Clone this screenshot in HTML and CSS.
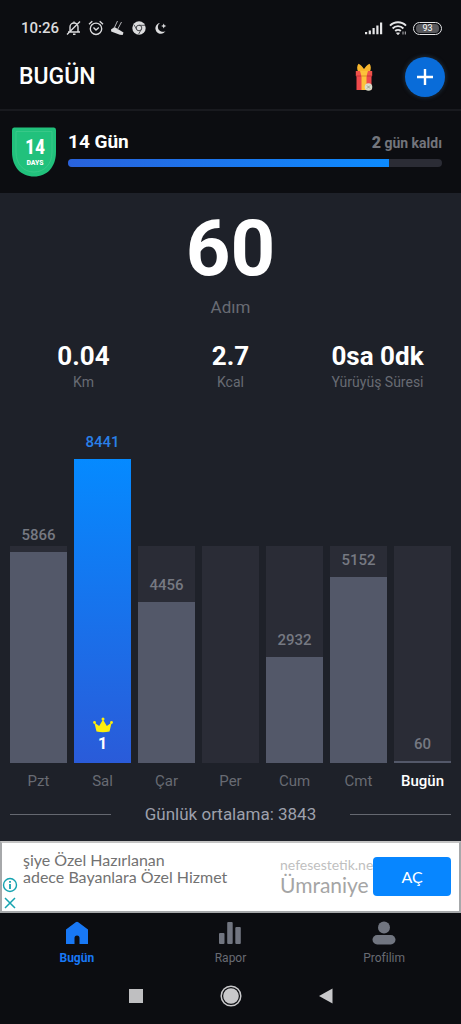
FILE: index.html
```html
<!DOCTYPE html>
<html lang="tr">
<head>
<meta charset="utf-8">
<meta name="viewport" content="width=device-width, initial-scale=1">
<title>Bugün</title>
<link rel="stylesheet" href="styles.css">
</head>
<body>
<div class="status">
  <span class="clock">10:26</span>
  <div class="status-icons">
    <svg width="16" height="16" viewBox="0 0 16 16" fill="none" stroke="#dcdcde" stroke-width="1.4"><path d="M4 11.5V7a4 4 0 0 1 8 0v4.500M2 12h12M7 14.300h2.500M8 1.500v1.500M1 14.500 14 1.500"/></svg>
    <svg width="16" height="16" viewBox="0 0 16 16" fill="none" stroke="#dcdcde" stroke-width="1.400"><circle cx="8" cy="8.800" r="5.700"/><path d="M5.500 7.500 8 10l2.800-2.500M1 4.300 4.300 1.300M15 4.300l-3.300-3"/></svg>
    <svg width="15" height="16" viewBox="0 0 15 16"><path d="M1 9.500 4.500 7l9 5.500-.8 2.500-2.900-.2L1.200 11.500z" fill="#dcdcde"/><path d="M7.500 1 4 8.500M11.500 2 7.500 9.500" stroke="#b4b4b8" stroke-width="1"/></svg>
    <svg width="16" height="16" viewBox="0 0 16 16"><circle cx="8" cy="8" r="6.700" fill="#dcdcde"/><circle cx="8" cy="8" r="2.800" fill="#dcdcde" stroke="#44454a" stroke-width="1"/><path d="M8 5.300h6M5.700 9.400 3 4.800M10.300 9.400 7.500 14.300" stroke="#44454a" stroke-width=".9"/></svg>
    <svg width="15" height="16" viewBox="0 0 14 16"><path d="M6.500 3A5.400 5.400 0 1 0 12 11 4.200 4.200 0 0 1 6.500 3z" fill="#dcdcde"/><path d="m10.200 3.500.8 1.800 1.800.7-1.800.8-.8 1.800-.8-1.800-1.800-.8 1.800-.7z" fill="#dcdcde"/></svg>
  </div>
  <div class="signal">
    <svg width="18" height="14" viewBox="0 0 18 14" fill="#e6e6e8"><path d="M0 11h2.200v2.300H0zM3.700 9.500h2.200v3.800H3.700zM7.500 7h2.200v6.300H7.500zM11.300 4.500h2.200v8.800h-2.200zM15 1.500h2.200v11.800H15z"/></svg>
    <svg width="18" height="14" viewBox="0 0 18 14" fill="none" stroke="#e6e6e8" stroke-width="1.900"><path d="M1 4.700a11 11 0 0 1 16 0M3.600 7.500a7.400 7.400 0 0 1 10.800 0M6.200 10a4 4 0 0 1 5.600 0"/><path d="m9 13.800-1.500-1.900h3zM14 10.500v3M16.300 10.500v3" fill="#e6e6e8" stroke-width=".8"/></svg>
    <span class="battery"><span class="battery-level">93</span></span>
  </div>
</div>

<header class="header">
  <h1 class="title">BUGÜN</h1>
  <button class="gift" type="button" aria-label="Hediye">
    <svg width="18" height="28" viewBox="0 0 18 28"><path d="M3 8.500C1.800 6 1.800 3 3.500.800 6 2 7.500 4 9 6c1.500-2 3-4 5.500-5.200C16.200 3 16.200 6 15 8.500z" fill="#f8b62d"/><path d="M1.500 9h15v18h-15z" fill="#ef4a4c"/><path d="M.8 8h16.400v5H.8z" fill="#f0524b"/><path d="M1 12.500h16v1H1z" fill="#c93238"/><path d="M5 8h8l-1.500 5V27h-5V13z" fill="#fcc23b"/><path d="M6.500 12.500h5v1h-5z" fill="#dc8c24"/><circle cx="13.500" cy="24" r="3.800" fill="#d9dccb"/><path d="m12 22.500 3 3m0-3-3 3" stroke="#8c907d" stroke-width=".8"/></svg>
  </button>
  <button class="add" type="button" aria-label="Ekle">
    <svg width="18" height="18" viewBox="0 0 18 18" stroke="#fff" stroke-width="2.400"><path d="M9 1v16M1 9h16"/></svg>
  </button>
</header>

<section class="challenge">
  <svg class="badge" width="46" height="50" viewBox="0 0 46 50"><path d="M3 .5h40q2 0 2 2.500v22C45 40 36 49.500 23 49.500S1 40 1 25V3Q1 .500 3 .500z" fill="#21c17c"/><path d="M5 4.500h36V25c0 12-7.500 20-18 20S5 37 5 25z" fill="none" stroke="#38c888"/><text class="badge-number" x="24" y="27">14</text><text class="badge-unit" x="24" y="38">DAYS</text></svg>
  <div class="challenge-body">
    <div class="challenge-row">
      <h2 class="challenge-name">14 Gün</h2>
      <span class="remaining"><b class="remaining-count">2</b> gün kaldı</span>
    </div>
    <div class="progress"><div class="progress-fill" style="width:85.700%"></div></div>
  </div>
</section>

<main class="main">
  <div class="steps">60</div>
  <div class="steps-label">Adım</div>
  <div class="stats">
    <div><div class="stat-value">0.04</div><div class="stat-label">Km</div></div>
    <div><div class="stat-value">2.7</div><div class="stat-label">Kcal</div></div>
    <div><div class="stat-value">0sa 0dk</div><div class="stat-label">Yürüyüş Süresi</div></div>
  </div>

  <div class="chart">
    <div class="day"><div class="plot"><span class="count">5866</span><div class="bar" style="height:211px"></div></div><span class="day-name">Pzt</span></div>
    <div class="day"><div class="plot"><span class="count count-best">8441</span><div class="bar bar-best" style="height:304px"><svg width="20" height="16" viewBox="0 0 20 16" fill="#fdee0b"><path d="M3.500 14.500 1.300 5.500 6.200 9 10 2.500 13.800 9l4.900-3.500-2.200 9q-6.500 1.500-13 0z"/><circle cx="1.500" cy="5.500" r="1.400"/><circle cx="10" cy="2" r="1.500"/><circle cx="18.500" cy="5.500" r="1.400"/></svg><span class="rank">1</span></div></div><span class="day-name">Sal</span></div>
    <div class="day"><div class="plot"><span class="count">4456</span><div class="bar" style="height:161px"></div></div><span class="day-name">Çar</span></div>
    <div class="day"><div class="plot"></div><span class="day-name">Per</span></div>
    <div class="day"><div class="plot"><span class="count">2932</span><div class="bar" style="height:106px"></div></div><span class="day-name">Cum</span></div>
    <div class="day"><div class="plot"><span class="count">5152</span><div class="bar" style="height:186px"></div></div><span class="day-name">Cmt</span></div>
    <div class="day"><div class="plot"><span class="count">60</span><div class="bar" style="height:2px"></div></div><span class="day-name day-today">Bugün</span></div>
  </div>

  <div class="average">Günlük ortalama: 3843</div>
</main>

<aside class="ad">
  <div class="ad-marks">
    <svg width="16" height="16" viewBox="0 0 16 16" fill="none" stroke="#16a3b0" stroke-width="1.400"><circle cx="8" cy="8" r="6.500"/><path d="M8 7v5M8 4v1.800" stroke-width="1.800"/></svg>
    <svg width="16" height="16" viewBox="0 0 16 16" stroke="#16a3b0" stroke-width="1.500"><path d="m3 3 10 10M13 3 3 13"/></svg>
  </div>
  <div class="ad-copy"><div>şiye Özel Hazırlanan</div><div>adece Bayanlara Özel Hizmet</div></div>
  <div class="ad-place"><div class="ad-site">nefesestetik.ne</div><div class="ad-town">Ümraniye</div></div>
  <button class="ad-open" type="button">AÇ</button>
</aside>

<nav class="tabs">
  <a class="tab tab-active" href="#"><svg width="24" height="24" viewBox="0 0 24 24" fill="currentColor"><path d="M12 .8q.7 0 1.300.5L23 8.500V23h-8.500v-6a2.500 2.500 0 0 0-5 0v6H1V8.500l9.700-7.200q.6-.5 1.300-.5z"/></svg><span>Bugün</span></a>
  <a class="tab" href="#"><svg width="24" height="24" viewBox="0 0 24 24" fill="#717580"><rect x="1" y="12" width="5.500" height="11" rx="1"/><rect x="9.200" y="1" width="5.500" height="22" rx="1"/><rect x="17.300" y="6" width="5.500" height="17" rx="1"/></svg><span>Rapor</span></a>
  <a class="tab" href="#"><svg width="24" height="24" viewBox="0 0 24 24" fill="#717580"><circle cx="12" cy="6.500" r="6"/><rect x=".5" y="14" width="23" height="9.500" rx="4.700"/></svg><span>Profilim</span></a>
</nav>

<div class="system">
  <button class="key" type="button" aria-label="Son uygulamalar"><svg width="22" height="22" viewBox="0 0 22 22"><path d="M4 4h14v14H4z" fill="#bfbfc1"/></svg></button>
  <button class="key" type="button" aria-label="Ana ekran"><svg width="22" height="22" viewBox="0 0 22 22"><circle cx="11" cy="11" r="9.800" fill="none" stroke="#c8c8ca" stroke-width="1.500"/><circle cx="11" cy="11" r="7.800" fill="#c8c8ca"/></svg></button>
  <button class="key" type="button" aria-label="Geri"><svg width="22" height="22" viewBox="0 0 22 22"><path d="M17.500 3.500v15L4 11z" fill="#c8c8ca"/></svg></button>
</div>
</body>
</html>
```

FILE: styles.css
```css
* { box-sizing: border-box; }

body {
  margin: 0;
  min-height: 100vh;
  display: flex;
  flex-direction: column;
  background: #0c0d11;
  color: #fff;
  font-family: Roboto, "Noto Sans", sans-serif;
}

button {
  border: 0;
  padding: 0;
  background: none;
  color: inherit;
  font: inherit;
  cursor: pointer;
}

svg { display: block; flex: none; }

.status {
  display: flex;
  align-items: center;
  height: 52px;
  padding: 4px 19px 0 21px;
}

.clock {
  font-size: 15px;
  font-weight: 500;
  color: #dcdcde;
}

.status-icons {
  display: flex;
  gap: 6px;
  margin-left: 7px;
}

.signal {
  display: flex;
  align-items: center;
  gap: 6px;
  margin-left: auto;
}

.battery {
  width: 29px;
  height: 13px;
  padding: 1px 2px;
  border: 1px solid #e6e6e8;
  border-radius: 7px;
}

.battery-level {
  display: block;
  height: 9px;
  border-radius: 4px;
  background: #58585c;
  font-size: 9px;
  line-height: 9px;
  text-align: center;
}

.header {
  display: flex;
  align-items: center;
  height: 59px;
  padding: 0 16px 8px 19px;
  border-bottom: 2px solid #191a1f;
}

.title {
  flex: 1;
  margin: 0;
  font-size: 23px;
  font-weight: 500;
  line-height: 32px;
}

.add {
  display: grid;
  place-items: center;
  width: 40px;
  height: 40px;
  margin-left: 32px;
  border-radius: 50%;
  background: #096cd9;
  box-shadow: 0 0 3px 2px #16202b;
}

.challenge {
  display: flex;
  height: 82px;
  padding: 16px 19px 0 11px;
}

.badge-number,
.badge-unit {
  fill: #fff;
  font-family: "Roboto Condensed", "Liberation Sans Narrow", Roboto, sans-serif;
  font-weight: 700;
  text-anchor: middle;
}

.badge-number { font-size: 20px; }
.badge-unit { font-size: 8px; }

.challenge-body {
  flex: 1;
  margin-left: 11px;
}

.challenge-row {
  display: flex;
  justify-content: space-between;
  align-items: baseline;
  height: 32px;
  line-height: 30px;
}

.challenge-name {
  margin: 0;
  font-size: 19px;
  font-weight: 700;
}

.remaining {
  color: #73757c;
  font-size: 14px;
  font-weight: 700;
}

.remaining-count { font-size: 16px; }

.progress {
  height: 8px;
  border-radius: 4px;
  overflow: hidden;
  background: #2b2c35;
}

.progress-fill {
  height: 100%;
  background: linear-gradient(90deg, #2962dc, #0d8bff);
}

.main {
  flex: 1;
  padding: 16px 10px 15px;
  background: #1e2129;
  text-align: center;
}

.steps {
  font-size: 78px;
  font-weight: 700;
  line-height: 80px;
}

.steps-label {
  margin-top: 6px;
  color: #686b73;
  font-size: 17px;
  line-height: 24px;
}

.stats {
  display: grid;
  grid-template-columns: repeat(3, 1fr);
  margin-top: 21px;
}

.stat-value {
  font-size: 26px;
  font-weight: 700;
  line-height: 32px;
}

.stat-label {
  color: #686b73;
  font-size: 14px;
  line-height: 20px;
}

.chart {
  display: grid;
  grid-template-columns: repeat(7, 1fr);
  gap: 7px;
  margin-top: 38px;
}

.plot {
  display: flex;
  flex-direction: column;
  justify-content: flex-end;
  height: 333px;
  background: linear-gradient(#2a2c36, #2a2c36) bottom / 100% 217px no-repeat;
}

.count {
  margin-bottom: 7px;
  color: #767982;
  font-size: 15px;
  font-weight: 500;
  line-height: 20px;
}

.count-best { color: #2a80e8; }

.bar { background: #535869; }

.bar-best {
  display: flex;
  flex-direction: column;
  align-items: center;
  justify-content: flex-end;
  padding-bottom: 9px;
  background: linear-gradient(#058aff, #2a5bd9);
}

.bar-best svg { margin-bottom: 1px; }

.rank {
  font-size: 16px;
  font-weight: 700;
  line-height: 20px;
}

.day-name {
  display: block;
  margin-top: 8px;
  color: #686b73;
  font-size: 15px;
  line-height: 20px;
}

.day-today {
  color: #fff;
  font-weight: 500;
}

.average {
  display: flex;
  align-items: center;
  justify-content: space-between;
  margin-top: 11px;
  color: #9da0ac;
  font-size: 17px;
  line-height: 24px;
}

.average::before,
.average::after {
  content: "";
  width: 23%;
  height: 1px;
  background: #656870;
}

.ad {
  display: flex;
  height: 72px;
  padding: 0 8px 0 0;
  border: 2px solid #a6a8aa;
  border-top-color: #c4c4c4;
  background: #fff;
  color: #727272;
  font-family: Lato, sans-serif;
}

.ad-marks {
  align-self: flex-end;
  display: grid;
  gap: 2px;
}

.ad-copy {
  flex: 1;
  margin: 8px 0 0 5px;
  font-size: 16px;
  line-height: 17px;
  white-space: nowrap;
}

.ad-place {
  width: 93px;
  margin-top: 14px;
  white-space: nowrap;
}

.ad-site {
  color: #bfbfbf;
  font-size: 14px;
  line-height: 16px;
}

.ad-town {
  color: #a5a5a5;
  font-size: 21px;
  line-height: 24px;
}

.ad-open {
  width: 78px;
  height: 39px;
  margin-top: 14px;
  border-radius: 4px;
  background: #0786ff;
  color: #fff;
  font-size: 16px;
}

.tabs {
  display: grid;
  grid-template-columns: repeat(3, 1fr);
  height: 57px;
  padding-top: 8px;
}

.tab {
  display: flex;
  flex-direction: column;
  align-items: center;
  gap: 5px;
  color: #686b73;
  font-size: 12px;
  line-height: 16px;
  text-decoration: none;
}

.tab-active {
  color: #1878f5;
  font-weight: 700;
}

.system {
  display: flex;
  justify-content: center;
  gap: 73px;
  height: 54px;
  padding-bottom: 2px;
}
```
